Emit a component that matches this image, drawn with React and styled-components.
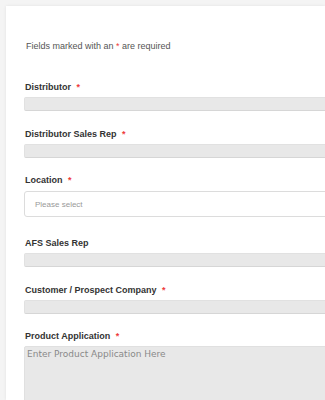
import styled, { createGlobalStyle } from "styled-components";

const GlobalStyle = createGlobalStyle`
  html, body {
    margin: 0;
    padding: 0;
    background: #f4f4f4;
    overflow: hidden;
  }
  body {
    font-family: "Liberation Sans", Arial, sans-serif;
  }
`;

const Page = styled.div`
  padding: 6px 0 0 6px;
  width: 325px;
  height: 400px;
  box-sizing: border-box;
  overflow: hidden;
`;

const Card = styled.form`
  width: 100%;
  height: 100%;
  background: #fff;
  box-shadow: 0 0 3px rgba(0, 0, 0, 0.08);
  padding: 34px 0 0 18px;
  box-sizing: border-box;
  overflow: hidden;
`;

const Intro = styled.p`
  margin: 0 0 29px 2px;
  font-size: 9px;
  line-height: 12px;
  color: #555;
`;

const Star = styled.span`
  color: #ee3b3b;
  margin-left: ${(p) => (p.$gap ? "3px" : "0")};
`;

const Field = styled.div`
  display: flex;
  flex-direction: column;
  margin-bottom: ${(p) => (p.$select ? "19.7px" : "16.7px")};
`;

const Label = styled.label`
  font-size: 9px;
  line-height: 12px;
  font-weight: 700;
  color: #333;
  margin: 0 0 ${(p) => (p.$select ? "5px" : "4px")} 1px;
`;

const Input = styled.div`
  height: 14px;
  margin-right: -20px;
  background: #e8e8e8;
  border: 1px solid #e1e1e1;
  border-bottom-color: #d6d6d6;
  border-radius: 2px;
  box-sizing: border-box;
`;

const Select = styled.div`
  height: 26px;
  margin-right: -20px;
  background: #fff;
  border: 1px solid #dcdcdc;
  border-radius: 3px;
  box-sizing: border-box;
  display: flex;
  align-items: center;
  padding-left: 10px;
  font-size: 8px;
  color: #999;
`;

const TextArea = styled.div`
  height: 80px;
  margin-right: -20px;
  background: #e8e8e8;
  border: 1px solid #e0e0e0;
  border-radius: 2px;
  box-sizing: border-box;
  padding: 1px 0 0 2px;
  font-family: "DejaVu Sans", Verdana, sans-serif;
  font-size: 9px;
  line-height: 12px;
  color: #888;
`;

function Required() {
  return <Star $gap>*</Star>;
}

export default function App() {
  return (
    <Page>
      <GlobalStyle />
      <Card>
        <Intro>
          Fields marked with an <Star>*</Star> are required
        </Intro>
        <Field>
          <Label>
            Distributor <Required />
          </Label>
          <Input />
        </Field>
        <Field>
          <Label>
            Distributor Sales Rep <Required />
          </Label>
          <Input />
        </Field>
        <Field $select>
          <Label $select>
            Location <Required />
          </Label>
          <Select>Please select</Select>
        </Field>
        <Field>
          <Label>AFS Sales Rep</Label>
          <Input />
        </Field>
        <Field>
          <Label>
            Customer / Prospect Company <Required />
          </Label>
          <Input />
        </Field>
        <Field>
          <Label>
            Product Application <Required />
          </Label>
          <TextArea>Enter Product Application Here</TextArea>
        </Field>
      </Card>
    </Page>
  );
}
